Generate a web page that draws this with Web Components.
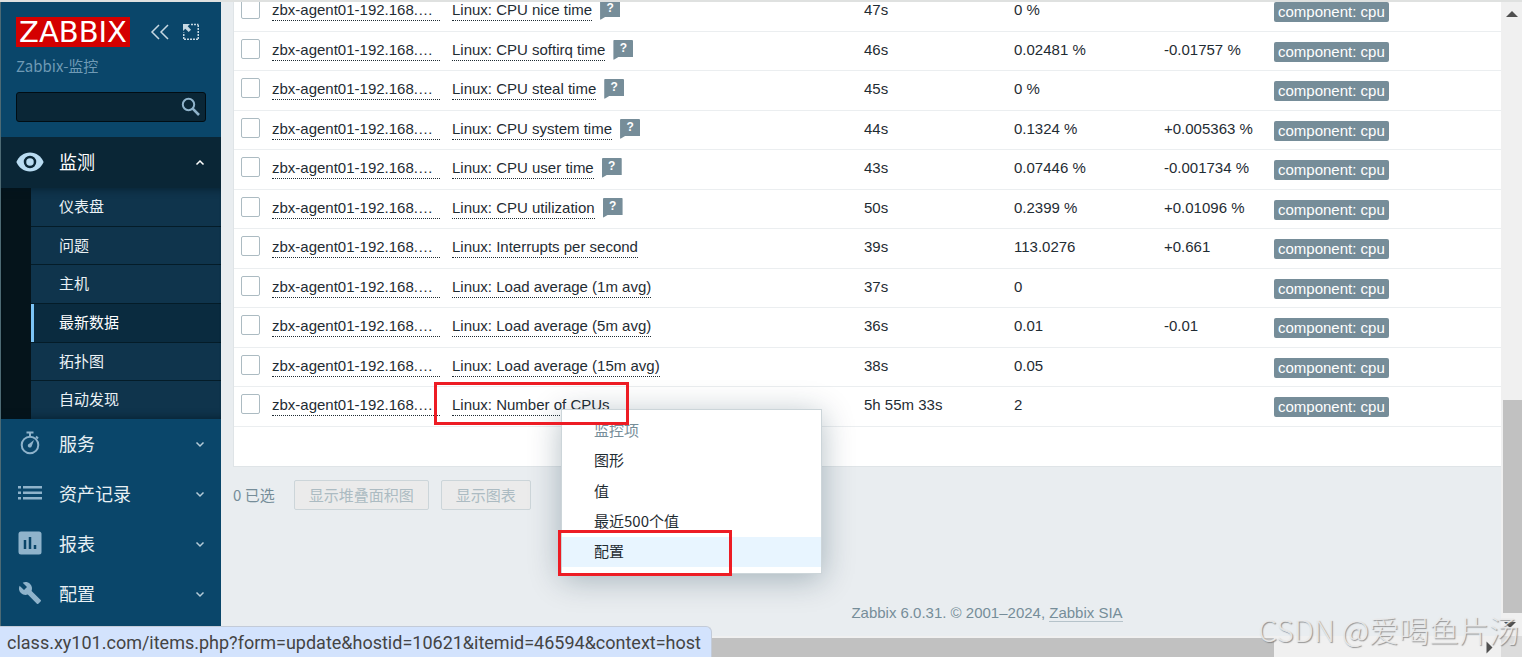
<!DOCTYPE html>
<html lang="zh-CN">
<head>
<meta charset="utf-8">
<title>Zabbix-监控: 最新数据</title>
<style>
html, body { margin: 0; height: 100%; }
body { font: 15px/20px "Liberation Sans", "Noto Sans CJK SC", sans-serif; color: #1f2c33; overflow: hidden; }
</style>
</head>
<body>
<zbx-app></zbx-app>
<script>
const define = (name, html, setup) => {
  const tpl = document.createElement('template');
  tpl.innerHTML = '<style>*{box-sizing:border-box}</style>' + html;
  customElements.define(name, class extends HTMLElement {
    constructor() {
      super();
      this.attachShadow({ mode: 'open' }).append(tpl.content.cloneNode(true));
    }
    connectedCallback() {
      if (setup && !this.ready) { this.ready = true; setup(this, this.shadowRoot); }
    }
  });
};

/* main menu section: icon slot, label, submenu slot */
define('zbx-menu-section', `
<style>
:host { display: block; }
a { display: flex; align-items: center; height: 50px; padding: 0 16px 0 15px; color: #e8f0f4; text-decoration: none;
    font: 18px/24px "Noto Sans CJK SC", sans-serif; }
:host([open]) a { height: 51px; background: #0a2636; color: #fff; }
.icon { display: flex; justify-content: center; width: 28px; margin-right: 15px; padding-bottom: 2px; color: #8fb3cb; }
:host([open]) .icon { color: #b9dcf2; }
.label { flex: 1; padding-bottom: 3px; }
.arrow { width: 10px; height: 10px; fill: none; stroke: #b5cbd8; stroke-width: 1.5; }
:host([open]) .arrow { transform: rotate(180deg); stroke: #fff; }
</style>
<a href="#"><span class="icon"><slot name="icon"></slot></span><span class="label"></span>
<svg class="arrow" viewBox="0 0 10 10"><path d="M1.500 3.500l3.500 3.500 3.500-3.500"/></svg></a>
<slot></slot>`, (el, root) => {
  root.querySelector('.label').textContent = el.getAttribute('label');
});

define('zbx-submenu', `
<style>
:host { display: flex; flex-direction: column; height: 231px; padding-left: 30px; position: relative;
  background: linear-gradient(90deg, #05141b 30px, #0f344c 30px); }
:host::after { content: ""; position: absolute; inset: 0; pointer-events: none;
  box-shadow: inset 0 9px 8px -8px rgba(0,20,30,.6), inset 0 -9px 8px -8px rgba(0,20,30,.6); }
a { flex: 1; display: flex; align-items: center; padding: 0 0 2px 28px; border-bottom: 1px solid #041c28; color: #eaf1f5; text-decoration: none;
  font: 15px/20px "Noto Sans CJK SC", sans-serif; }
a:last-child { border-bottom: 0; }
a[aria-current] { background: #0a2b3f; box-shadow: inset 3px 0 #7cc4f5; color: #fff; }
</style>
<a href="#">仪表盘</a><a href="#">问题</a><a href="#">主机</a><a href="#" aria-current="page">最新数据</a><a href="#">拓扑图</a><a href="#">自动发现</a>`);

define('zbx-sidebar', `
<style>
:host { display: block; background: #0a466a; border-left: 1px solid #4d6a74; overflow: hidden; }
header { padding: 15px 15px; height: 135px; }
.top { display: flex; align-items: center; height: 30px; }
.logo { display: flex; justify-content: center; align-items: center; width: 114px; height: 30px; background: #d40000; color: #fff;
  font: 29px/30px "DejaVu Sans", sans-serif; text-decoration: none; }
.tool { border: 0; padding: 0; background: none; color: #c6d8e2; width: 20px; height: 20px; }
.tool svg { display: block; }
.collapse { margin-left: 20px; margin-right: 11px; }
.org { margin-top: 9px; color: #6f9ab5; font: 15px/20px "Noto Sans CJK SC", sans-serif; }
form { display: flex; align-items: center; height: 30px; margin-top: 16px; border: 1px solid #010d14; border-radius: 3px; background: #0a2636; }
input { flex: 1; min-width: 0; border: 0; background: none; color: #fff; outline: 0; font: inherit; }
form button { border: 0; padding: 0; margin-right: 4px; background: none; color: #8fb3cb; height: 20px; }
</style>
<header>
  <div class="top">
    <a class="logo" href="#">ZABBIX</a>
    <button class="tool collapse" aria-label="收起"><svg width="20" height="20" fill="none" stroke="currentColor" stroke-width="1.5"><path d="M9 3L2 10l7 7M18 3l-7 7 7 7"/></svg></button>
    <button class="tool" aria-label="隐藏侧边栏"><svg width="20" height="20" fill="none" stroke="currentColor" stroke-width="1.5"><path d="M10 2.500H17.500M17.250 3V17.500M17 17.250H2.500M2.750 17V10.500" stroke-dasharray="2 1"/><path d="M2 2h7L6.700 4.300 10 7.700 7.700 10 4.300 6.700 2 9z" fill="currentColor" stroke="none"/></svg></button>
  </div>
  <div class="org">Zabbix-监控</div>
  <form><input type="text" aria-label="搜索"><button type="button" aria-label="搜索"><svg width="20" height="20" fill="none" stroke="currentColor"><circle cx="7.500" cy="7.500" r="5.700" stroke-width="2"/><path d="M11.700 11.700l6.300 6.300" stroke-width="2.600"/></svg></button></form>
</header>
<nav>
  <zbx-menu-section label="监测" open>
    <svg slot="icon" width="28" height="20" viewBox="0 0 28 20"><path d="M14 .5C7.800.5 2.600 4.400.4 10c2.200 5.600 7.400 9.500 13.600 9.500S25.400 15.600 27.600 10C25.400 4.400 20.200.5 14 .5z" fill="currentColor"/><circle cx="14" cy="10" r="5" fill="none" stroke="#0a2636" stroke-width="2.500"/></svg>
    <zbx-submenu></zbx-submenu>
  </zbx-menu-section>
  <zbx-menu-section label="服务">
    <svg slot="icon" width="22" height="24" viewBox="0 0 22 24" fill="none" stroke="currentColor" stroke-width="2"><circle cx="11" cy="14" r="8.300"/><path d="M7.500 1.500h7M11 2v3M17 5.500l2 2"/><path d="M15 9l-2.300 6.200a2 2 0 1 1-2.500-2.500z" fill="currentColor" stroke="none"/></svg>
  </zbx-menu-section>
  <zbx-menu-section label="资产记录">
    <svg slot="icon" width="24" height="16" viewBox="0 0 24 16" fill="currentColor"><path d="M0 1h3v2.500H0zM5 1h19v2.500H5zM0 6.500h3V9H0zM5 6.500h19V9H5zM0 12h3v2.500H0zM5 12h19v2.500H5z"/></svg>
  </zbx-menu-section>
  <zbx-menu-section label="报表">
    <svg slot="icon" width="24" height="24" viewBox="0 0 24 24"><rect x=".5" y=".5" width="23" height="23" rx="2.500" fill="currentColor"/><path d="M7 9v9M12 6v12M17 14v4" stroke="#0a466a" stroke-width="2.500"/></svg>
  </zbx-menu-section>
  <zbx-menu-section label="配置">
    <svg slot="icon" width="24" height="24" viewBox="0 0 24 24"><path d="M22.700 19l-9.100-9.100c.9-2.300.4-5-1.500-6.900-2-2-5-2.400-7.400-1.300L9 6 6 9 1.600 4.700C.4 7.100.9 10.100 2.900 12.100c1.900 1.900 4.600 2.400 6.900 1.500l9.100 9.100c.4.4 1 .4 1.400 0l2.300-2.300c.5-.4.5-1.100.1-1.400z" fill="currentColor"/></svg>
  </zbx-menu-section>
</nav>`);

define('zbx-tag', `
<style>
:host { display: inline-block; height: 20px; padding: 0 4px; border-radius: 2px; background: #768d99; color: #fff; font: 15px/20px "Liberation Sans", sans-serif; }
</style><slot></slot>`);

/* speech-bubble hint button */
define('zbx-hint', `
<style>
:host { display: inline-block; vertical-align: top; margin-left: 8px; }
button { display: block; width: 20px; height: 20px; padding: 0 0 4px; border: 0; border-radius: 1px; background: #768d99; color: #fff;
  font: bold 12px/16px "Liberation Sans", sans-serif; clip-path: polygon(0 0, 100% 0, 100% 85%, 25% 85%, 0 100%); }
</style><button aria-label="说明">?</button>`);

define('zbx-items', `
<style>
:host { display: block; }
.panel { background: #fff; border: 1px solid #dfe4e7; padding-bottom: 39px; }
table { width: 100%; table-layout: fixed; border-collapse: separate; border-spacing: 0; }
tr { height: 39px; }
tr:nth-child(odd) { height: 40px; }
td { padding: 8px 0 0; border-bottom: 1px solid #ebeef0; vertical-align: top; white-space: nowrap; }
.check { padding: 7px 0 0 7px; }
input { display: block; appearance: none; width: 19px; height: 20px; margin: 0; border: 1px solid #acbbc2; border-radius: 2px; background: #fff; }
.tags { padding-top: 10px; }
a { display: inline-block; height: 21px; color: inherit; text-decoration: none; border-bottom: 1px dotted #1f2c33; vertical-align: top; }
.host { width: 168px; }
.c1 { width: 38px } .c2 { width: 180px } .c4 { width: 150px } .c5 { width: 150px } .c6 { width: 110px } .c7 { width: 466px }
</style>
<div class="panel"><table>
<colgroup><col class="c1"><col class="c2"><col><col class="c4"><col class="c5"><col class="c6"><col class="c7"></colgroup>
<tbody></tbody></table></div>`, (el, root) => {
  const rows = [
    ['CPU nice time', 1, '47s', '0 %', ''],
    ['CPU softirq time', 1, '46s', '0.02481 %', '-0.01757 %'],
    ['CPU steal time', 1, '45s', '0 %', ''],
    ['CPU system time', 1, '44s', '0.1324 %', '+0.005363 %'],
    ['CPU user time', 1, '43s', '0.07446 %', '-0.001734 %'],
    ['CPU utilization', 1, '50s', '0.2399 %', '+0.01096 %'],
    ['Interrupts per second', 0, '39s', '113.0276', '+0.661'],
    ['Load average (1m avg)', 0, '37s', '0', ''],
    ['Load average (5m avg)', 0, '36s', '0.01', '-0.01'],
    ['Load average (15m avg)', 0, '38s', '0.05', ''],
    ['Number of CPUs', 0, '5h 55m 33s', '2', '']
  ];
  root.querySelector('tbody').innerHTML = rows.map(([name, hint, age, value, change]) => `<tr>
<td class="check"><input type="checkbox" aria-label="Linux: ${name}"></td>
<td><a class="host" href="#">zbx-agent01-192.168.…</a></td>
<td><a href="#">Linux: ${name}</a>${hint ? '<zbx-hint></zbx-hint>' : ''}</td>
<td>${age}</td><td>${value}</td><td>${change}</td>
<td class="tags"><zbx-tag>component: cpu</zbx-tag></td></tr>`).join('');
});

define('zbx-actions', `
<style>
:host { display: flex; align-items: center; color: #768d99; font: 15px/20px "Noto Sans CJK SC", sans-serif; }
span { margin-right: 19px; }
button { height: 30px; margin-right: 12px; padding: 0 14px; border: 1px solid #ccd5d9; border-radius: 2px; background: #ebebeb; color: #acbbc2; font: inherit; }
</style>
<span>0 已选</span><button disabled>显示堆叠面积图</button><button disabled>显示图表</button>`);

define('zbx-context-menu', `
<style>
:host { display: flex; flex-direction: column; width: 261px; height: 165px; padding: 5px 0 6px; background: #fff; border: 1px solid #ccd5d9;
  box-shadow: 0 5px 30px rgba(0,40,60,.3); font: 15px/20px "Noto Sans CJK SC", sans-serif; }
h3, a { flex: 1; display: flex; align-items: center; margin: 0; padding: 0 0 1px 32px; font: inherit; color: #1f2c33; text-decoration: none; }
h3 { color: #768d99; }
a.active { background: #e8f5ff; }
</style>
<h3>监控项</h3><a href="#">图形</a><a href="#">值</a><a href="#">最近500个值</a><a href="#" class="active">配置</a>`);

define('zbx-scrollbar', `
<style>
:host { display: flex; background: #f0f0f0; }
i { background: #c1c1c1; }
svg { flex: none; fill: #505050; }
:host([vertical]) { flex-direction: column; align-items: flex-end; }
:host([vertical]) i { width: 19px; height: 213px; margin-top: auto; }
:host(:not([vertical])) .up { display: none; }
:host(:not([vertical])) i { width: calc(100% - 227px); margin-top: 2px; }
:host(:not([vertical])) .down { transform: rotate(-90deg); margin-left: auto; }
</style>
<svg class="up" width="20" height="24"><path d="M4 15l6-6 6 6z"/></svg><i></i>
<svg class="down" width="24" height="23"><path d="M6 9l6 6 6-6z"/></svg>`);

define('zbx-app', `
<style>
:host { display: grid; position: relative; height: 100vh; overflow: hidden; background: #e9edf0;
  grid-template: 2px 1fr 21px / 221px 1fr 21px; }
.edge { grid-column: 1 / -1; background: #dfe1e0; }
zbx-sidebar { grid-row: 2 / 4; }
main { overflow: hidden; min-width: 0; min-height: 0; }
.page { display: flex; flex-direction: column; width: calc(100% + 252px); height: 100%; padding: 0 12px; }
zbx-items { margin-top: -11px; }
zbx-actions { margin-top: 13px; }
footer { margin-top: auto; padding-bottom: 13px; text-align: center; color: #768d99; }
footer a { color: inherit; text-decoration: none; border-bottom: 1px solid #b6c3ca; }
.corner { background: #dcdcdc; }
zbx-context-menu { position: absolute; left: 561px; top: 409px; }
.mark { position: absolute; border: 3px solid #ed1c24; pointer-events: none; }
.mark.item { left: 434px; top: 382px; width: 195px; height: 43px; }
.mark.config { left: 558px; top: 530px; width: 174px; height: 46px; }
.status { position: absolute; left: 0; bottom: 0; height: 31px; padding: 0 10px 0 7px; border: solid #c3cbd8; border-width: 1px 1px 0 0; border-radius: 0 6px 0 0;
  background: #d3e3fd; color: #444; font: 18px/32px Roboto, sans-serif; white-space: nowrap; }
.watermark { position: absolute; right: 3px; bottom: 8px; color: rgba(236,236,236,.9); font: 300 30px/40px "Noto Sans CJK SC", sans-serif;
  text-shadow: 1px 1px 1px rgba(110,110,110,.7); white-space: nowrap; pointer-events: none; }
</style>
<div class="edge"></div>
<zbx-sidebar></zbx-sidebar>
<main><div class="page">
  <zbx-items></zbx-items>
  <zbx-actions></zbx-actions>
  <footer>Zabbix 6.0.31. © 2001–2024, <a href="#">Zabbix SIA</a></footer>
</div></main>
<zbx-scrollbar vertical></zbx-scrollbar>
<zbx-scrollbar></zbx-scrollbar>
<div class="corner"></div>
<zbx-context-menu></zbx-context-menu>
<div class="mark item"></div>
<div class="mark config"></div>
<div class="status">class.xy101.com/items.php?form=update&amp;hostid=10621&amp;itemid=46594&amp;context=host</div>
<div class="watermark">CSDN @爱喝鱼片汤</div>`);
</script>
</body>
</html>
